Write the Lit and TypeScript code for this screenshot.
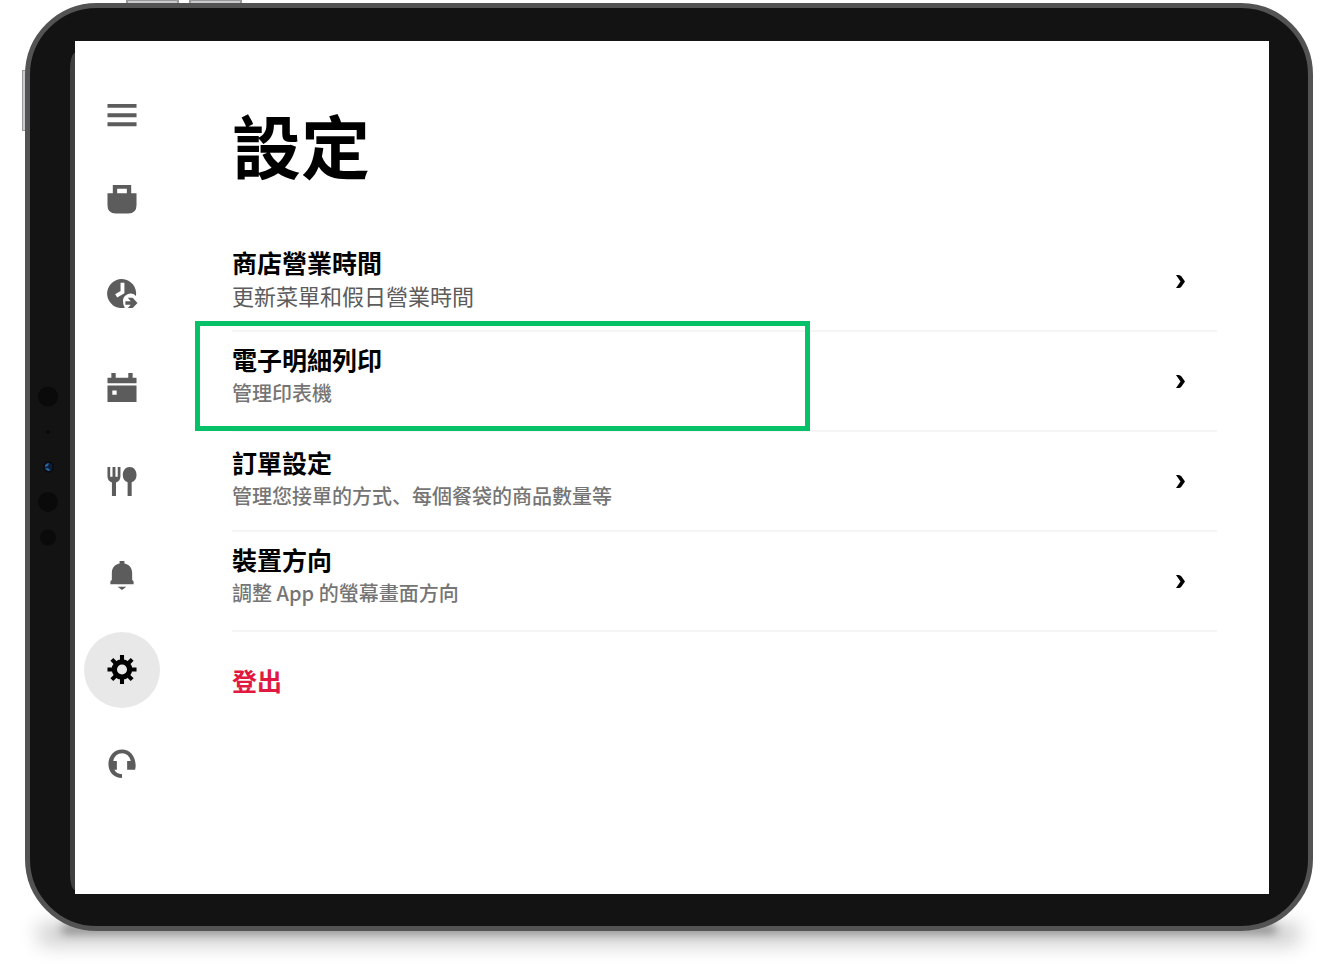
import { LitElement, html, css, svg, nothing } from "lit";
import { customElement, state } from "lit/decorators.js";
import { classMap } from "lit/directives/class-map.js";

const icons = {
  menu: svg`<path d="M0 3h30v4H0zM0 12.700h30v4H0zM0 22h30v4H0z"/>`,
  bag: svg`<path fill-rule="evenodd" d="M5.500 0h19v8.500H30V21q0 8.500-8.500 8.500h-13Q0 29.500 0 21V8.500h5.500zM10 4v4.500h10V4z"/>`,
  history: svg`<path d="M29.400 17.500A15 15 0 1 0 18 29.700a8.500 8.500 0 0 1-1.800-5.200a7.800 7.800 0 0 1 13.200-7z"/><path d="M15.500 4v9.500l-6.500 4" fill="none" stroke="#fff" stroke-width="4"/><path d="M18.500 23h5.500l-3-3.500h5l5 5.200-5 5.300h-5l3-3.500h-5.500z"/>`,
  calendar: svg`<path fill-rule="evenodd" d="M0 5h4V0h4.500v5h13V0H26v5h4v5.500H0zM0 13h30v17H0zM5 18v4.500h4.500V18z"/>`,
  food: svg`<path d="M0 0h2.800v10h2.400V0h3v10h2.400V0h2.800v9.500q0 5-4.600 6.500v14H4.600V16Q0 14.500 0 9.500z"/><path d="M23 0c4.200 0 7 3.400 7 8.200 0 4-2 6.600-5 7.600V30h-4.200V15.800c-3-1-5-3.600-5-7.600C15.800 3.400 18.800 0 23 0z"/>`,
  bell: svg`<path d="M12.500 0h5v2.700C22.600 3.500 25.500 7.600 25.500 12.500v6.800l1.500 2V24H3v-2.700l1.500-2v-6.800c0-4.900 2.900-9 8-9.800zM10.500 26.500h9L15 30z"/>`,
  gear: svg`<circle cx="15" cy="15" r="7.900" fill="none" stroke="currentColor" stroke-width="5.400"/><path d="M15 0v6M15 24v6M0 15h6M24 15h6M4.500 4.500l5 5M20.500 20.500l5 5M4.500 25.500l5-5M20.500 9.500l5-5" fill="none" stroke="currentColor" stroke-width="4.200"/>`,
  headset: svg`<path d="M15 .5C7.300.5 1 6.800 1 15.500S7 30 15 30v-4c-3.800 0-6.500-1.700-8-4.500h2.700v-9H6C7 7.500 10.500 4.500 15 4.500s8 3 9 8h-3.700v9h8.200c.5-1.800.8-3.700.5-6C28.500 6.800 22.700.5 15 .5z"/>`,
};

type IconName = keyof typeof icons;

const navItems: { icon: IconName; label: string }[] = [
  { icon: "menu", label: "選單" },
  { icon: "bag", label: "訂單" },
  { icon: "history", label: "歷史記錄" },
  { icon: "calendar", label: "日曆" },
  { icon: "food", label: "菜單" },
  { icon: "bell", label: "通知" },
  { icon: "gear", label: "設定" },
  { icon: "headset", label: "支援" },
];

const settings = [
  { title: "商店營業時間", detail: "更新菜單和假日營業時間", large: true },
  { title: "電子明細列印", detail: "管理印表機", highlighted: true },
  { title: "訂單設定", detail: "管理您接單的方式、每個餐袋的商品數量等" },
  { title: "裝置方向", detail: "調整 App 的螢幕畫面方向" },
];

@customElement("side-nav")
class SideNav extends LitElement {
  @state() private active: IconName = "gear";

  static styles = css`
    :host {
      display: block;
      padding: 47px 9px 24px;
    }
    nav {
      display: flex;
      flex-direction: column;
      gap: 18px;
    }
    .item {
      display: grid;
      place-items: center;
      width: 76px;
      height: 76px;
      padding: 0;
      border: 0;
      border-radius: 50%;
      background: none;
      color: #5c5c5c;
      cursor: pointer;
    }
    .item.menu {
      height: 56px;
    }
    .item.active {
      background: #e8e8e8;
      color: #000;
    }
    .icon {
      display: block;
      width: 30px;
      height: 30px;
      fill: currentColor;
      overflow: visible;
    }
  `;

  render() {
    return html`<nav aria-label="主選單">
      ${navItems.map(
        ({ icon, label }) => html`<button
          type="button"
          class=${classMap({ item: true, menu: icon === "menu", active: icon === this.active })}
          aria-label=${label}
          @click=${() => (this.active = icon)}
        >
          <svg class="icon" viewBox="-0.5 0 31 31" aria-hidden="true">${icons[icon]}</svg>
        </button>`
      )}
    </nav>`;
  }
}

@customElement("settings-page")
class SettingsPage extends LitElement {
  static styles = css`
    :host {
      display: block;
      flex: 1;
      min-width: 0;
      padding: 53px 52px 24px 63px;
    }
    h1 {
      margin: 0;
      font-size: 69px;
      line-height: 100px;
      font-weight: 700;
    }
    .list {
      margin: 38px 0 0;
      padding: 0;
      list-style: none;
    }
    .entry {
      position: relative;
      border-bottom: 2px solid #f5f5f5;
    }
    .row {
      display: flex;
      align-items: center;
      justify-content: space-between;
      min-height: 98px;
      padding-right: 32px;
      color: #000;
      text-decoration: none;
    }
    .text {
      padding-bottom: 4px;
    }
    .entry:nth-child(even) .text {
      padding-bottom: 10px;
    }
    .title,
    .detail {
      display: block;
      line-height: 33px;
    }
    .title {
      font-size: 25px;
      font-weight: 700;
    }
    .detail {
      font-family: "Noto Sans CJK SC", "Noto Sans", sans-serif;
      font-size: 20px;
      font-weight: 500;
      color: #757575;
    }
    .detail.large {
      font-size: 22px;
      font-weight: 400;
      color: #5c5c5c;
    }
    .chevron {
      flex: none;
      width: 9px;
      height: 13px;
    }
    .marker {
      position: absolute;
      inset: -11px auto -1px -37px;
      width: 615px;
      max-width: 100%;
      box-sizing: border-box;
      border: 5px solid #06c167;
      pointer-events: none;
    }
    .logout {
      margin-top: 32px;
      padding: 0;
      border: 0;
      background: none;
      font: inherit;
      font-size: 25px;
      line-height: 33px;
      font-weight: 700;
      color: #e11940;
      cursor: pointer;
    }
  `;

  render() {
    return html`
      <h1>設定</h1>
      <ul class="list">
        ${settings.map(
          (s) => html`<li class="entry">
            <a class="row" href="#">
              <span class="text">
                <span class="title">${s.title}</span>
                <span class=${classMap({ detail: true, large: !!s.large })}>${s.detail}</span>
              </span>
              <svg class="chevron" viewBox="0 0 9 13" aria-hidden="true">
                <path d="M0 0h2.500Q4.500 0 5.500 1.500L9 6.500 5.500 11.500Q4.500 13 2.500 13H0l4.500-6.500z" />
              </svg>
            </a>
            ${s.highlighted ? html`<div class="marker"></div>` : nothing}
          </li>`
        )}
      </ul>
      <button type="button" class="logout">登出</button>
    `;
  }
}

@customElement("app-root")
class AppRoot extends LitElement {
  static styles = css`
    :host {
      display: flex;
      box-sizing: border-box;
      min-height: 100vh;
      padding: 3px 23px 40px 25px;
      overflow: hidden;
      background: #fff;
      color: #000;
      font-family: "Noto Sans CJK TC", "Noto Sans", sans-serif;
    }
    .tablet {
      position: relative;
      z-index: 0;
      flex: 1;
      display: flex;
      min-width: 0;
    }
    .body {
      flex: 1;
      display: flex;
      min-width: 0;
      box-sizing: border-box;
      padding: 33px 39px 32px 45px;
      border: 5px solid #535353;
      border-radius: 72px;
      background: #131313;
    }
    .screen {
      flex: 1;
      display: flex;
      min-width: 0;
      background: #fff;
    }
    .edge {
      position: absolute;
      z-index: -1;
      box-sizing: border-box;
      border: 1px solid #999;
      background: #c8cacd;
    }
    .edge.power {
      left: -3px;
      top: 67px;
      width: 6px;
      height: 61px;
    }
    .edge.volume {
      top: -4px;
      width: 53px;
      height: 8px;
      border-width: 2px;
    }
    .edge.up {
      left: 101px;
    }
    .edge.down {
      left: 164px;
    }
    .shadow {
      position: absolute;
      z-index: -2;
      border-radius: 12px;
      background: #000;
    }
    .shadow.wide {
      left: 12px;
      right: 12px;
      bottom: -14px;
      height: 22px;
      opacity: 0.2;
      filter: blur(10px);
    }
    .shadow.tight {
      left: 36px;
      right: 36px;
      bottom: -3px;
      height: 10px;
      opacity: 0.35;
      filter: blur(5px);
    }
    .rim {
      position: absolute;
      left: 45px;
      top: 50px;
      bottom: 41px;
      width: 5px;
      border-radius: 5px 0 0 5px / 16px 0 0 16px;
      background: #404040;
    }
    .sensors {
      position: absolute;
      left: 13px;
      top: 50%;
      width: 20px;
      height: 164px;
      margin-top: -82px;
    }
  `;

  render() {
    return html`<div class="tablet">
      <div class="shadow wide"></div>
      <div class="shadow tight"></div>
      <div class="edge power"></div>
      <div class="edge volume up"></div>
      <div class="edge volume down"></div>
      <div class="body">
        <main class="screen">
          <side-nav></side-nav>
          <settings-page></settings-page>
        </main>
      </div>
      <div class="rim"></div>
      <svg class="sensors" viewBox="0 0 20 164" aria-hidden="true">
        <g fill="#0a0a0a">
          <circle cx="10" cy="11.500" r="10" />
          <circle cx="10" cy="47" r="2" />
          <circle cx="10.500" cy="82" r="5.500" />
          <circle cx="10" cy="117" r="10" />
          <circle cx="10" cy="152.500" r="8" />
        </g>
        <circle cx="10.500" cy="82" r="4" fill="#0b1c3d" />
        <path d="M7 80.500q1-2.500 4-2.500l-1 3-3 1zM7 83.500l3-.5 2.500 2.500q-3 1.500-5.500-2z" fill="#2a659f" />
      </svg>
    </div>`;
  }
}
